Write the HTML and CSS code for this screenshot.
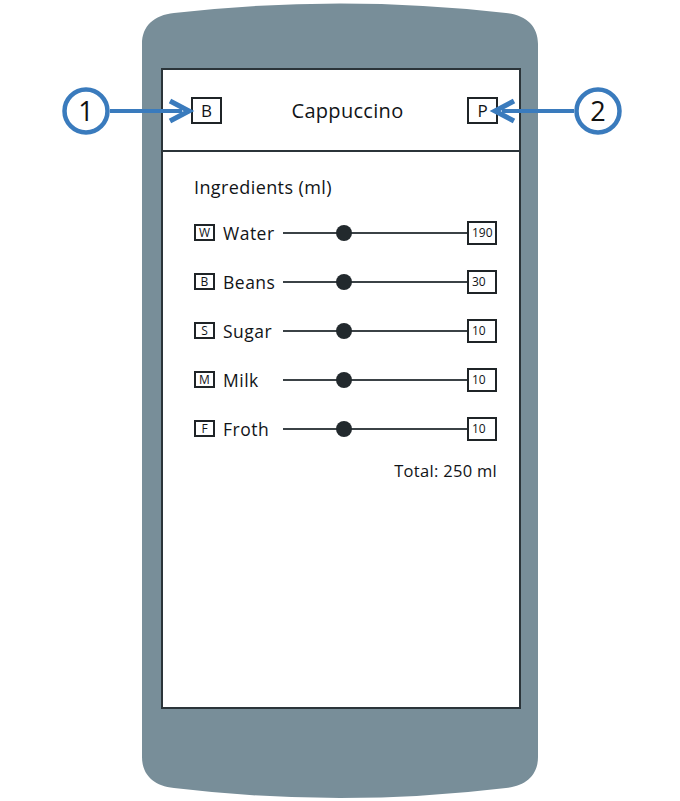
FILE: index.html
```html
<!DOCTYPE html>
<html>
<head>
<meta charset="utf-8">
<link rel="stylesheet" href="styles.css">
</head>
<body>
<div class="page">
  <div class="phone">
    <svg class="phone-shape" width="396" height="801" viewBox="0 0 396 801">
      <path d="M0,44 C0,26 12,15 32,13 Q198,-6 364,13 C384,15 396,26 396,44 L396,757 C396,775 384,786 364,788 Q198,808 32,788 C12,786 0,775 0,757 Z" fill="#788e99"/>
    </svg>
    <div class="screen">
      <div class="header">
        <span class="btn">B</span>
        <span class="title">Cappuccino</span>
        <span class="btn">P</span>
      </div>
      <div class="content">
        <div class="heading">Ingredients (ml)</div>
        <div class="row">
          <span class="ico">W</span><span class="label">Water</span>
          <span class="slider"><span class="knob"></span></span>
          <span class="val">190</span>
        </div>
        <div class="row">
          <span class="ico">B</span><span class="label">Beans</span>
          <span class="slider"><span class="knob"></span></span>
          <span class="val">30</span>
        </div>
        <div class="row">
          <span class="ico">S</span><span class="label">Sugar</span>
          <span class="slider"><span class="knob"></span></span>
          <span class="val">10</span>
        </div>
        <div class="row">
          <span class="ico">M</span><span class="label">Milk</span>
          <span class="slider"><span class="knob"></span></span>
          <span class="val">10</span>
        </div>
        <div class="row">
          <span class="ico">F</span><span class="label">Froth</span>
          <span class="slider"><span class="knob"></span></span>
          <span class="val">10</span>
        </div>
        <div class="total">Total: 250 ml</div>
      </div>
    </div>
  </div>
  <svg class="callout callout-1" width="150" height="60" viewBox="0 0 150 60">
    <line x1="48" y1="30" x2="120" y2="30" stroke="#3a7bbd" stroke-width="4"/>
    <path d="M108,20 L127,30 L108,40" fill="none" stroke="#3a7bbd" stroke-width="5" stroke-linejoin="miter"/>
    <circle cx="24" cy="30" r="21.5" fill="#fff" stroke="#3a7bbd" stroke-width="4.5"/>
    <text x="24" y="39.5" text-anchor="middle" class="num">1</text>
  </svg>
  <svg class="callout callout-2" width="150" height="60" viewBox="0 0 150 60">
    <line x1="102" y1="30" x2="30" y2="30" stroke="#3a7bbd" stroke-width="4"/>
    <path d="M42,20 L23,30 L42,40" fill="none" stroke="#3a7bbd" stroke-width="5" stroke-linejoin="miter"/>
    <circle cx="126" cy="30" r="21.5" fill="#fff" stroke="#3a7bbd" stroke-width="4.5"/>
    <text x="126" y="39.5" text-anchor="middle" class="num">2</text>
  </svg>
</div>
</body>
</html>
```

FILE: styles.css
```css
html, body {
  margin: 0;
  padding: 0;
  background: #ffffff;
}

body {
  font-family: "Open Sans", "DejaVu Sans", sans-serif;
  color: #111417;
}

.page {
  position: relative;
  width: 680px;
  height: 801px;
  overflow: hidden;
}

.phone {
  position: relative;
  margin-left: 142px;
  width: 396px;
  height: 801px;
  padding: 68px 0 0 19px;
  box-sizing: border-box;
}

.phone-shape {
  position: absolute;
  left: 0;
  top: 0;
}

.screen {
  position: relative;
  width: 360px;
  height: 641px;
  box-sizing: border-box;
  background: #ffffff;
  border: 2px solid #2b3439;
}

.header {
  height: 82px;
  box-sizing: border-box;
  border-bottom: 2px solid #2b3439;
  display: flex;
  align-items: center;
  justify-content: space-between;
  padding: 0 21px 0 28px;
}

.btn {
  width: 27px;
  height: 23px;
  border: 2px solid #1f2427;
  display: flex;
  align-items: center;
  justify-content: center;
  font-size: 17px;
  line-height: 1;
}

.title {
  font-size: 20px;
  letter-spacing: 0.3px;
  margin-left: 6px;
}

.content {
  padding: 22px 22px 0 31px;
}

.heading {
  font-size: 18px;
  line-height: 26px;
  letter-spacing: 0.4px;
  margin-bottom: 14px;
}

.row {
  display: flex;
  align-items: center;
  height: 49px;
  margin-top: -6px;
  margin-bottom: 6px;
}

.row:first-of-type {
  margin-top: 0;
}

.ico {
  width: 17px;
  height: 13px;
  border: 2px solid #1f2427;
  font-size: 12px;
  line-height: 13px;
  text-align: center;
  flex: none;
}

.label {
  width: 60px;
  margin-left: 8px;
  font-size: 17.5px;
  letter-spacing: 0.5px;
}

.slider {
  position: relative;
  flex: 1;
  height: 2px;
  background: #3b4246;
}

.knob {
  position: absolute;
  left: 53px;
  top: -7px;
  width: 16px;
  height: 16px;
  border-radius: 50%;
  background: #22292d;
}

.val {
  width: 23px;
  height: 20px;
  border: 2px solid #1f2427;
  font-size: 12px;
  line-height: 20px;
  padding-left: 3px;
  flex: none;
}

.total {
  text-align: right;
  font-size: 16.5px;
  margin-top: 3px;
  letter-spacing: 0.3px;
}

.callout {
  position: absolute;
  top: 81px;
}

.callout-1 {
  left: 62px;
}

.callout-2 {
  left: 472px;
}

.num {
  font-family: "Open Sans", "DejaVu Sans", sans-serif;
  font-size: 27px;
  fill: #111111;
}
```
